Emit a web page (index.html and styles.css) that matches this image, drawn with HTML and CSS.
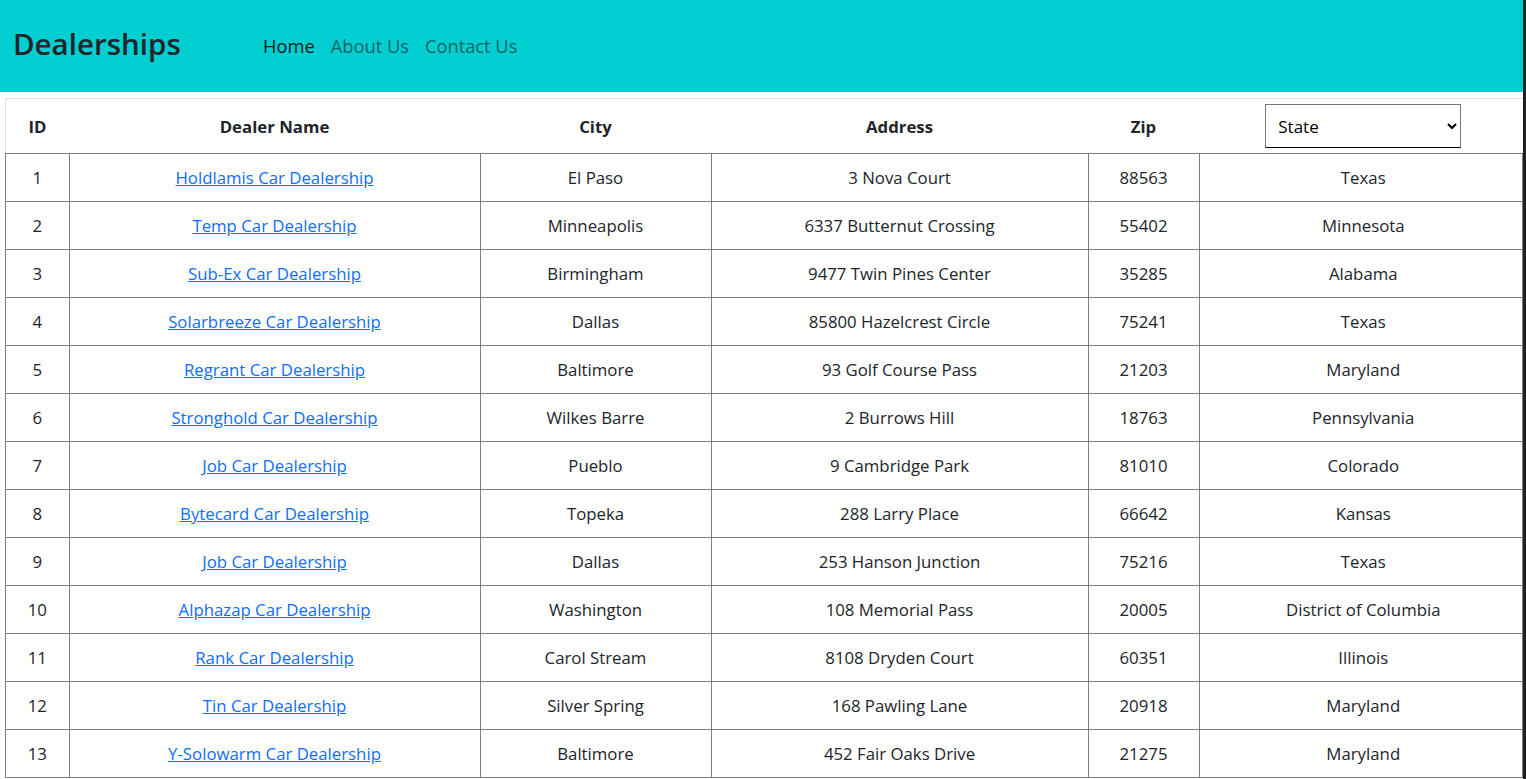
FILE: index.html
```html
<!DOCTYPE html>
<html lang="en">
<head>
<meta charset="utf-8">
<title>Dealerships</title>
<link rel="stylesheet" href="styles.css">
</head>
<body>
<div class="page">
  <nav class="topbar">
    <h2 class="brand">Dealerships</h2>
    <ul class="nav">
      <li><a class="nav-link active" href="#">Home</a></li>
      <li><a class="nav-link" href="#">About Us</a></li>
      <li><a class="nav-link" href="#">Contact Us</a></li>
    </ul>
  </nav>
  <main class="content">
    <table class="dealers">
      <thead>
        <tr>
          <th class="c-id">ID</th>
          <th class="c-name">Dealer Name</th>
          <th class="c-city">City</th>
          <th class="c-addr">Address</th>
          <th class="c-zip">Zip</th>
          <th class="c-state">
            <select class="state-select">
              <option>State</option>
              <option>Texas</option>
              <option>Minnesota</option>
              <option>Alabama</option>
            </select>
          </th>
        </tr>
      </thead>
      <tbody>
        <tr><td>1</td><td><a href="#">Holdlamis Car Dealership</a></td><td>El Paso</td><td>3 Nova Court</td><td>88563</td><td>Texas</td></tr>
        <tr><td>2</td><td><a href="#">Temp Car Dealership</a></td><td>Minneapolis</td><td>6337 Butternut Crossing</td><td>55402</td><td>Minnesota</td></tr>
        <tr><td>3</td><td><a href="#">Sub-Ex Car Dealership</a></td><td>Birmingham</td><td>9477 Twin Pines Center</td><td>35285</td><td>Alabama</td></tr>
        <tr><td>4</td><td><a href="#">Solarbreeze Car Dealership</a></td><td>Dallas</td><td>85800 Hazelcrest Circle</td><td>75241</td><td>Texas</td></tr>
        <tr><td>5</td><td><a href="#">Regrant Car Dealership</a></td><td>Baltimore</td><td>93 Golf Course Pass</td><td>21203</td><td>Maryland</td></tr>
        <tr><td>6</td><td><a href="#">Stronghold Car Dealership</a></td><td>Wilkes Barre</td><td>2 Burrows Hill</td><td>18763</td><td>Pennsylvania</td></tr>
        <tr><td>7</td><td><a href="#">Job Car Dealership</a></td><td>Pueblo</td><td>9 Cambridge Park</td><td>81010</td><td>Colorado</td></tr>
        <tr><td>8</td><td><a href="#">Bytecard Car Dealership</a></td><td>Topeka</td><td>288 Larry Place</td><td>66642</td><td>Kansas</td></tr>
        <tr><td>9</td><td><a href="#">Job Car Dealership</a></td><td>Dallas</td><td>253 Hanson Junction</td><td>75216</td><td>Texas</td></tr>
        <tr><td>10</td><td><a href="#">Alphazap Car Dealership</a></td><td>Washington</td><td>108 Memorial Pass</td><td>20005</td><td>District of Columbia</td></tr>
        <tr><td>11</td><td><a href="#">Rank Car Dealership</a></td><td>Carol Stream</td><td>8108 Dryden Court</td><td>60351</td><td>Illinois</td></tr>
        <tr><td>12</td><td><a href="#">Tin Car Dealership</a></td><td>Silver Spring</td><td>168 Pawling Lane</td><td>20918</td><td>Maryland</td></tr>
        <tr><td>13</td><td><a href="#">Y-Solowarm Car Dealership</a></td><td>Baltimore</td><td>452 Fair Oaks Drive</td><td>21275</td><td>Maryland</td></tr>
      </tbody>
    </table>
  </main>
</div>
</body>
</html>
```
FILE: styles.css
```css
html, body {
  margin: 0;
  padding: 0;
}
body {
  background: #202020;
  font-family: "Open Sans", "Noto Sans", "Liberation Sans", sans-serif;
  font-size: 16.8px;
  color: #212529;
}
.page {
  width: calc(100% - 3px);
  min-height: 100vh;
  background: #fff;
}
.topbar {
  display: flex;
  align-items: center;
  height: 92px;
  background: #00ced1;
  padding-left: 13px;
  box-sizing: border-box;
}
.brand {
  margin: 0;
  width: 242px;
  font-size: 29.5px;
  font-weight: 600;
  color: #212529;
  line-height: 1;
  padding-bottom: 4px;
}
.nav {
  display: flex;
  list-style: none;
  margin: 0;
  padding: 0 0 2px;
}
.nav-link {
  display: block;
  padding: 8px 8px;
  font-size: 18.3px;
  text-decoration: none;
  color: rgba(0, 0, 0, 0.55);
}
.nav-link.active {
  color: rgba(0, 0, 0, 0.9);
}
.content {
  padding: 6px 0 0 5px;
}
.dealers {
  width: 1518px;
  border-collapse: collapse;
  table-layout: fixed;
}
.dealers thead tr {
  border-top: 1px solid #dee2e6;
  border-left: 1px solid #dee2e6;
}
.dealers th {
  height: 54px;
  font-weight: 700;
  text-align: center;
  vertical-align: middle;
  padding: 0;
}
.c-id { width: 63px; }
.c-name { width: 411px; }
.c-city { width: 231px; }
.c-addr { width: 377px; }
.c-zip { width: 111px; }
.c-state { width: auto; }
.dealers td {
  height: 47px;
  padding: 0;
  text-align: center;
  vertical-align: middle;
  border: 1px solid #808080;
}
.dealers td:last-child {
  padding-left: 5px;
}
.dealers a {
  color: #0d6efd;
  text-decoration: underline;
}
.state-select {
  width: 196px;
  height: 44px;
  margin-left: 5px;
  padding: 0 8px;
  font-family: inherit;
  font-size: 17px;
  color: #000;
  background: #fff;
  border: 1px solid #767676;
  border-bottom-color: #000;
  border-radius: 0;
}
```
